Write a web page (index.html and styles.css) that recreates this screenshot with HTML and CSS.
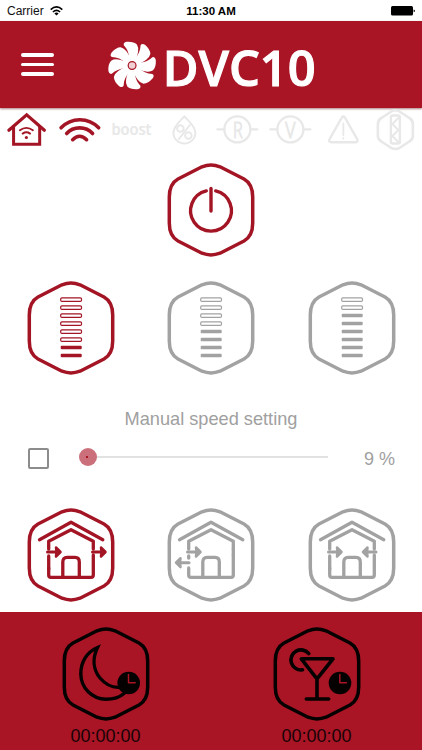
FILE: index.html
```html
<!DOCTYPE html>
<html lang="en">
<head>
<meta charset="utf-8">
<title>DVC10</title>
<link rel="stylesheet" href="styles.css">
</head>
<body>
<svg class="defs" width="0" height="0" aria-hidden="true">
  <defs>
    <path id="hex" stroke-width="3.5" d="M-41.700-13C-41.700-21-38.500-27.900-33-31L-9-43.200Q0-46.600 9-43.200L33-31C38.500-27.900 41.700-21 41.700-13V13C41.700 21 38.500 27.900 33 31L9 43.200Q0 46.600-9 43.200L-33 31C-38.500 27.900-41.700 21-41.700 13Z"/>
    <path id="blade" d="M-3-6C-2.800-12-4.800-16.500-8.300-20.300Q-9-23-5.500-23.700Q1.500-24.200 4.800-21Q6.700-18 6-14C5.400-10 4.500-8 3-5Z"/>
    <rect id="empty" x="-10.300" y="-1.600" width="20.800" height="3.500" rx="1.200" stroke-width="1.200"/>
    <rect id="full" x="-10.300" y="-1.700" width="21" height="3.500" rx="1" fill="currentColor" stroke="none"/>
    <g id="house" stroke-width="3.300">
      <path d="M-31.500-15.300L0-32.800L31.800-15.300"/>
      <path d="M-22.300-6V-13.700L0-25.300L22.300-13.700V-6"/>
      <path d="M-22.300 13V20Q-22.300 22.300-20 22.300H20Q22.300 22.300 22.300 20V0"/>
      <path d="M-8.200 21V7Q-8.200 2.300-4 2.300H4Q8.300 2.300 8.300 7V21"/>
    </g>
    <g id="arrow" stroke-width="3"><path d="M-13.500 0H-2"/><path fill="currentColor" stroke-width="2.500" d="M-5-4.500L-.5 0L-5 4.500L-4.500 0Z"/></g>
    <g id="clock" stroke="none">
      <circle r="11.300" fill="#050101"/>
      <path d="M-.2-8.500V-.2H6.500" fill="none" stroke="#a91525" stroke-width="1.500"/>
    </g>
  </defs>
</svg>

<main class="app">
  <div class="status">
    <div class="carrier">Carrier
      <svg width="13" height="10" viewBox="0 0 13 10"><g fill="none" stroke="#000" stroke-width="1.600"><path d="M.7 3.600Q6.500-1.800 12.300 3.600"/><path d="M2.900 6Q6.500 2.700 10.100 6"/></g><path d="M4.400 7.400Q6.500 5.800 8.600 7.400L6.500 9.600Z"/></svg>
    </div>
    <div class="time">11:30 AM</div>
    <svg class="battery" width="24" height="10" viewBox="0 0 24 10"><rect width="22" height="9.500" rx="1.500"/><path d="M22.600 3.400Q24 3.600 24 4.800T22.600 6.200Z"/></svg>
  </div>

  <header class="header">
    <div class="menu"><i></i><i></i><i></i></div>
    <svg class="logo" width="216" height="80" viewBox="106 24 216 80" fill="#fff">
      <g transform="translate(132.100 64.500)">
        <use href="#blade"/><use href="#blade" transform="rotate(45)"/><use href="#blade" transform="rotate(90)"/><use href="#blade" transform="rotate(135)"/><use href="#blade" transform="rotate(180)"/><use href="#blade" transform="rotate(225)"/><use href="#blade" transform="rotate(270)"/><use href="#blade" transform="rotate(315)"/>
        <circle r="6.500"/><circle r="3.900" fill="#f0d0d3" stroke="#a91525" stroke-width="1.200"/>
      </g>
      <text class="brand" x="162.800" y="84.600" textLength="152.800" lengthAdjust="spacingAndGlyphs">DVC10</text>
    </svg>
  </header>

  <div class="indicators">
    <svg class="on" viewBox="-26 -22 52 44"><g stroke-width="3.500"><path d="M-17.500.3L.3-15.200L18 .3" stroke-width="3.200"/><path d="M-12.800-3V14.300H13.300V-3" stroke-width="3"/></g><g stroke-width="1.900"><path d="M-6.500.2Q0-4.500 6.500.2"/><path d="M-3.700 3.600Q0 1 3.700 3.600"/></g><circle cy="7.500" r="1.600" fill="currentColor" stroke="none"/></svg>
    <svg class="on" viewBox="-26 -22 52 44" stroke-width="3.600"><path d="M-18.300-2.200C-8-13 9-13 19.300-2.200"/><path d="M-12.700 3.500C-6-4 6.500-4 13.200 3.500"/><path d="M-6.700 9.700Q.2 2.700 7.200 9.700"/></svg>
    <svg viewBox="-26 -22 52 44"><text class="boost" x="-21" y="5.300" textLength="40" lengthAdjust="spacingAndGlyphs">boost</text></svg>
    <svg viewBox="-26 -22 52 44" stroke-width="1.900"><path d="M0-13.700C-4-9-11-4-11 3A11 10.500 0 0 0 11 3C11-4 4-9 0-13.700Z"/><circle cx="-4" cy="-1.500" r="3.300"/><circle cx="4" cy="5.500" r="3.300"/><path d="M5.500-5L-5.500 9"/></svg>
    <svg viewBox="-26 -22 52 44" stroke-width="2.300"><circle cy="-.6" r="13"/><path d="M-20-.6H-13M13-.6H20"/><text class="letter" transform="translate(.5 7.500) scale(.72 1)">R</text></svg>
    <svg viewBox="-26 -22 52 44" stroke-width="2.300"><circle cy="-.6" r="13"/><path d="M-20-.6H-13M13-.6H20"/><text class="letter" transform="translate(0 7.500) scale(.78 1)">V</text></svg>
    <svg viewBox="-26 -22 52 44" stroke-width="2.400"><path d="M-1.500-12.500Q0-14.500 1.500-12.500L14 9.500Q14.800 12 12 12.200H-12Q-14.800 12-14 9.500Z"/><path d="M0-6.500V5M0 7.800V8.500" stroke-width="1.800"/></svg>
    <svg class="raised" viewBox="-26 -22 52 44"><path stroke-width="2.600" d="M-17.500-6Q-17.500-10-14-12L-4-18.500Q0-21 4-18.500L14-12Q17.500-10 17.500-6V6Q17.500 9.500 14 11.500L4 18Q0 20-4 18L-14 11.500Q-17.500 9.500-17.500 6Z"/><rect x="-4.500" y="-14.500" width="9" height="28" rx="2" stroke-width="2.400"/><path stroke-width="2" d="M4-13L-3-6L3 0L-3 6L3 12"/></svg>
  </div>

  <div class="power"><svg class="btn on" viewBox="-45 -48 90 96"><use href="#hex"/><g stroke-width="3.400"><path d="M-4.700-19.100A20.400 20.400 0 1 0 4.700-19.100"/><path d="M0-21.500V1"/></g></svg></div>

  <div class="row levels">
    <svg class="btn on" viewBox="-45 -48 90 96"><use href="#hex"/><use href="#empty" y="-28.500"/><use href="#empty" y="-20.500"/><use href="#empty" y="-12.500"/><use href="#empty" y="-4.500"/><use href="#empty" y="3.500"/><use href="#empty" y="11.500"/><use href="#full" y="19.500"/><use href="#full" y="27.500"/></svg>
    <svg class="btn" viewBox="-45 -48 90 96"><use href="#hex"/><use href="#empty" y="-28.500"/><use href="#empty" y="-20.500"/><use href="#empty" y="-12.500"/><use href="#empty" y="-4.500"/><use href="#full" y="3.500"/><use href="#full" y="11.500"/><use href="#full" y="19.500"/><use href="#full" y="27.500"/></svg>
    <svg class="btn" viewBox="-45 -48 90 96"><use href="#hex"/><use href="#empty" y="-28.500"/><use href="#empty" y="-20.500"/><use href="#full" y="-12.500"/><use href="#full" y="-4.500"/><use href="#full" y="3.500"/><use href="#full" y="11.500"/><use href="#full" y="19.500"/><use href="#full" y="27.500"/></svg>
  </div>

  <div class="caption">Manual speed setting</div>
  <div class="speed">
    <span class="check"></span>
    <span class="slider"><span class="thumb"></span><span class="track"></span></span>
    <span class="value">9 %</span>
  </div>

  <div class="row modes">
    <svg class="btn on" viewBox="-45 -48 90 96"><use href="#hex"/><use href="#house"/><path d="M-22.300 1V14" stroke-width="3.300"/><use href="#arrow" x="-10" y="-3"/><use href="#arrow" x="35" y="-3"/></svg>
    <svg class="btn" viewBox="-45 -48 90 96"><use href="#hex"/><use href="#house"/><path d="M-22.300 1V3M22.300-6V0" stroke-width="3.300"/><use href="#arrow" x="-10" y="-3"/><use href="#arrow" transform="translate(-35.500 7.700) scale(-1 1)"/></svg>
    <svg class="btn" viewBox="-45 -48 90 96"><use href="#hex"/><use href="#house"/><path d="M-22.300 1V14" stroke-width="3.300"/><use href="#arrow" x="-10" y="-3"/><use href="#arrow" transform="translate(10.500 -3) scale(-1 1)"/></svg>
  </div>

  <footer class="timers">
    <div class="timer">
      <svg class="btn" viewBox="-45 -48 90 96"><use href="#hex"/><path stroke-width="3.400" stroke-linejoin="miter" d="M18 19.500C14 23 8 25.300 0 25.300C-14 25-25 14-25.200 0C-25.300-12-19-22-8.500-26.500C-14-15-12.500-4-6 4C0 11 8 14.500 16 13"/><use href="#clock" x="22.700" y="9"/></svg>
      <span>00:00:00</span>
    </div>
    <div class="timer">
      <svg class="btn" viewBox="-45 -48 90 96"><use href="#hex"/><g stroke-width="3.600"><path d="M-15.700-15.200H16L0 4.800ZM0 5V25M-10.700 25H11.700"/><path d="M-8.200-20.300A10 10 0 1 0-14.500-4.200"/></g><use href="#clock" x="23" y="9"/></svg>
      <span>00:00:00</span>
    </div>
  </footer>
</main>
</body>
</html>
```
FILE: styles.css
```css
* { box-sizing: border-box; }
body {
  margin: 0;
  background: #fff;
  font-family: "Liberation Sans", Arial, sans-serif;
}
.defs { display: none; }
.app {
  width: 422px;
  height: 750px;
  display: flex;
  flex-direction: column;
  overflow: hidden;
}
.app > * { flex: none; }

.status {
  height: 21px;
  display: grid;
  grid-template-columns: 1fr auto 1fr;
  align-items: center;
  padding: 1px 7px 0;
  font-size: 12px;
  color: #111;
}
.carrier { display: flex; gap: 6px; align-items: center; }
.time { font-weight: bold; font-size: 11.5px; color: #000; }
.battery { justify-self: end; }

.header {
  height: 87px;
  display: flex;
  align-items: center;
  padding-left: 21px;
  background: #a91525;
  box-shadow: 0 1px 2px rgba(90, 0, 10, .5);
}
.menu { width: 33px; display: grid; gap: 6px; }
.menu i { height: 3.5px; border-radius: 2px; background: #fff; }
.logo { margin-left: 52px; overflow: visible; }
.brand { font: 600 48px "Open Sans", "Noto Sans", sans-serif; stroke: #fff; stroke-width: 1.1; }

.indicators {
  height: 44px;
  display: grid;
  grid-template-columns: repeat(8, 1fr);
}
.indicators svg {
  width: 100%;
  height: 44px;
  fill: none;
  stroke: currentColor;
  stroke-linecap: round;
  stroke-linejoin: round;
  color: #e8e8e8;
}
.indicators .on { color: #a31524; stroke-linejoin: miter; }
.boost { font: 600 17px "Open Sans", sans-serif; fill: currentColor; stroke-width: .2; }
.letter { font: 300 22.5px "Open Sans", sans-serif; text-anchor: middle; fill: currentColor; stroke-width: 1.2; }

.btn {
  display: block;
  width: 90px;
  height: 96px;
  fill: none;
  stroke: currentColor;
  stroke-linecap: round;
  stroke-linejoin: round;
  color: #a2a2a2;
}
.btn.on { color: #a31524; }
.power { height: 118.500px; padding: 9.700px 0 0 .3px; display: flex; justify-content: center; }
.row { display: grid; grid-template-columns: repeat(3, 1fr); justify-items: center; padding-left: 1px; }
.levels { height: 129.500px; padding-top: 9.800px; }

.caption { height: 40px; line-height: 38px; text-align: center; font-size: 18.200px; color: #a0a0a0; }
.speed { height: 37px; display: flex; align-items: center; padding: 0 27px 0 28px; color: #a0a0a0; }
.check { width: 21px; height: 21px; border: 2px solid #8c8c8c; border-radius: 2px; }
.slider { width: 249px; margin: -3px 0 0 30px; display: flex; align-items: center; }
.thumb { width: 18px; height: 18px; border-radius: 50%; background: radial-gradient(circle 1.500px at 8px 9px, #a91525 90%, #cb6f7b); }
.track { flex: 1; height: 2px; background: #e2e2e2; }
.value { margin-left: auto; font-size: 18px; line-height: 20px; padding-top: 1px; }

.modes { height: 135px; padding-top: 30.300px; }
.timers {
  height: 138px;
  display: grid;
  grid-template-columns: 1fr 1fr;
  background: #a91525;
}
.timer { display: flex; flex-direction: column; align-items: center; padding-top: 13.500px; }
.timer .btn { color: #050101; }
.timer span { font-size: 18px; line-height: 20px; margin-top: 4px; color: #180306; }
```
